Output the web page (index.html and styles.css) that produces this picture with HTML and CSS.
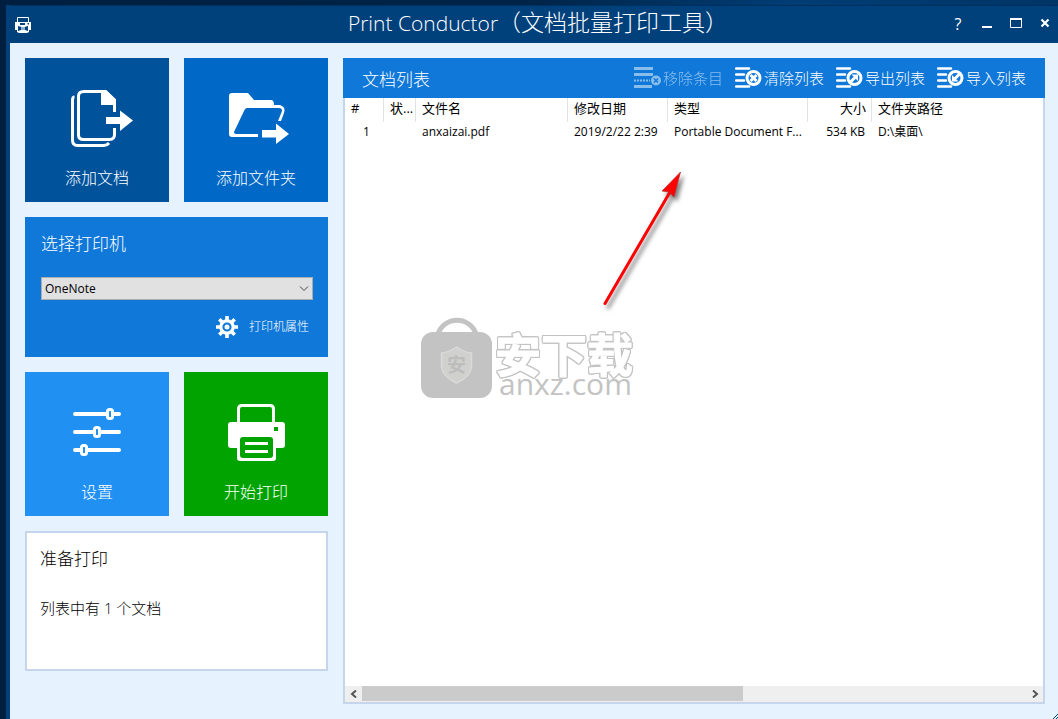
FILE: index.html
```html
<!DOCTYPE html>
<html lang="zh-CN">
<head>
<meta charset="utf-8">
<title>Print Conductor</title>
<link rel="stylesheet" href="styles.css">
</head>
<body>
<div class="window">
  <header class="titlebar">
    <svg class="app-icon" width="16" height="17" viewBox="0 0 16 17">
      <path d="M2.5 5.500V.5h11v5" fill="none" stroke="#fff"/>
      <path d="M0 5h16v8h-2v2l-2 1H4l-2-1v-2H0z" fill="#fff"/>
      <path d="M5 6h5v2H5zM12.500 6H14v1.500h-1.500zM3 9l3.500 1h3L13 9v5l-3-1H6l-3 1z" fill="#00407b"/>
      <path d="M6 10h4v3H6z" fill="#8eb0ce"/>
    </svg>
    <h1 class="title"><span class="title-name">Print Conductor</span>（文档批量打印工具）</h1>
    <div class="controls">
      <button class="control help" aria-label="帮助">?</button>
      <button class="control" aria-label="最小化"><svg width="12" height="12"><path d="M1 9h10" stroke="#fff" stroke-width="2"/></svg></button>
      <button class="control" aria-label="最大化"><svg width="12" height="12"><path d="M.5 1v8.500h11V1M0 .5h12" fill="none" stroke="#fff"/><path d="M0 1h12" stroke="#fff" stroke-width="2"/></svg></button>
      <button class="control" aria-label="关闭"><svg width="12" height="12"><path d="M2.500 1.500l7 7m0-7l-7 7" stroke="#fff" stroke-width="2.200"/></svg></button>
    </div>
  </header>
  <main class="content">
    <aside class="sidebar">
      <div class="tiles">
        <button class="tile navy">
          <svg class="tile-icon" width="64" height="64" viewBox="-3 0 64 64" overflow="visible" fill="none" stroke="#fff" stroke-width="3">
            <path d="M43.500 26V14l-9-8.500H13Q7.500 5.500 7.500 10v39q0 4.500 5 4.500h26q5 0 5-5V42"/>
            <path d="M30 4h5l10 10v5H30z" fill="#fff" stroke="none"/>
            <path d="M3.500 11q-2 0-2 3v40q0 5.500 5 5.500H33q3 0 5-2.500"/>
            <path d="M35 31h14v-6.500L62 34.500 49 45v-7H35z" fill="#fff" stroke="none"/>
          </svg>
          <span>添加文档</span>
        </button>
        <button class="tile blue">
          <svg class="tile-icon" width="64" height="64" viewBox="-1 0 64 64">
            <path d="M1 10q0-3 3-3h16l6 7h17q3 0 3 5h6q6 2 4 8l-3 8h-3l4-10q0-3-3-3H19q-2 0-3 3L6 46q0 2 3 2h21v3H4q-3 0-3-3z" fill="#fff"/>
            <path d="M34 44h14v-6.500l13 10.500-13 10v-6.500H34z" fill="#fff"/>
          </svg>
          <span>添加文件夹</span>
        </button>
      </div>
      <section class="printer">
        <label class="printer-label" for="printer">选择打印机</label>
        <div class="select-wrap">
          <select id="printer" class="printer-select"><option>OneNote</option></select>
          <svg class="chevron" width="10" height="6"><path d="M1 .5l4 4 4-4" fill="none" stroke="#444"/></svg>
        </div>
        <button class="properties">
          <svg width="22" height="22" viewBox="-11 -11 22 22" fill="none" stroke="#fff">
            <path d="M0-11V-6M0 11V6M-11 0h5M11 0H6M-7.700-7.700l3.500 3.500M7.700 7.700L4.200 4.200M-7.700 7.700l3.500-3.500M7.700-7.700L4.200-4.200" stroke-width="3.600"/>
            <circle r="6.200" stroke-width="3.200"/><circle r="2.500" fill="#fff" stroke="none"/>
          </svg>
          <span>打印机属性</span>
        </button>
      </section>
      <div class="tiles">
        <button class="tile sky">
          <svg class="tile-icon" width="64" height="64" viewBox="3 -1 64 64" fill="none" stroke="#fff">
            <path d="M10 13h44M10 31h44M10 49h44" stroke-width="4" stroke-linecap="round"/>
            <g fill="#2190f3" stroke-width="3"><rect x="42.500" y="8.500" width="5" height="9" rx="2"/><rect x="29.500" y="26.500" width="5" height="9" rx="2"/><rect x="16.500" y="44.500" width="5" height="9" rx="2"/></g>
          </svg>
          <span>设置</span>
        </button>
        <button class="tile green">
          <svg class="tile-icon" width="64" height="64" viewBox="-1 0 64 64">
            <path d="M10.500 24V9q0-3.500 3.500-3.500h28q3.500 0 3.500 3.500v15" fill="none" stroke="#fff" stroke-width="3"/>
            <path d="M3 22h51q3 0 3 3v20q0 3-3 3h-6v10q0 3-3 3H12q-3 0-3-3V48H3q-3 0-3-3V25q0-3 3-3z" fill="#fff"/>
            <rect x="12" y="37" width="33" height="21" rx="3" fill="#00a300"/><path d="M46 27h4v4h-4z" fill="#00a300"/>
            <path d="M17 43.500h23M17 51.500h23" stroke="#fff" stroke-width="3"/>
          </svg>
          <span>开始打印</span>
        </button>
      </div>
      <section class="status">
        <h2 class="status-title">准备打印</h2>
        <p class="status-text">列表中有 1 个文档</p>
      </section>
    </aside>
    <section class="documents">
      <div class="toolbar">
        <h2 class="toolbar-title">文档列表</h2>
        <button class="tool" disabled>
          <svg width="28" height="22" viewBox="0 0 28 22"><path d="M0 1.500h19M0 7.500h19M0 19.500h18" stroke="#fff" stroke-width="3"/><path d="M0 13.500h16" stroke="#fff" stroke-width="2" stroke-dasharray="2 1"/><circle cx="22" cy="13.500" r="5" fill="#fff"/><path d="M20 11.500l4 4m0-4l-4 4" stroke="#0f78d8" stroke-width="1.500"/></svg>
          <span>移除条目</span>
        </button>
        <button class="tool">
          <svg width="28" height="22" viewBox="0 0 28 22"><path d="M1 1.500h13M1 7.500h8M1 13.500h8M1 19.500h13" stroke="#fff" stroke-width="2.500" stroke-linecap="round"/><circle cx="18.500" cy="11" r="6.500" fill="none" stroke="#fff" stroke-width="3"/><path d="M15.500 8l6 6m0-6l-6 6" stroke="#fff" stroke-width="3"/></svg>
          <span>清除列表</span>
        </button>
        <button class="tool">
          <svg width="28" height="22" viewBox="0 0 28 22"><path d="M1 1.500h13M1 7.500h8M1 13.500h8M1 19.500h13" stroke="#fff" stroke-width="2.500" stroke-linecap="round"/><circle cx="18.500" cy="11" r="6.500" fill="none" stroke="#fff" stroke-width="3"/><path d="M14 15.500l6-6" stroke="#fff" stroke-width="3"/><path d="M15.500 7.500h6.500V14z" fill="#fff"/></svg>
          <span>导出列表</span>
        </button>
        <button class="tool">
          <svg width="28" height="22" viewBox="0 0 28 22"><path d="M1 1.500h13M1 7.500h8M1 13.500h8M1 19.500h13" stroke="#fff" stroke-width="2.500" stroke-linecap="round"/><circle cx="18.500" cy="11" r="6.500" fill="none" stroke="#fff" stroke-width="3"/><path d="M23 6.500l-6 6" stroke="#fff" stroke-width="3"/><path d="M15 8v6.500h6.500z" fill="#fff"/></svg>
          <span>导入列表</span>
        </button>
      </div>
      <div class="list">
        <div class="list-view">
          <table class="table">
            <colgroup><col class="c-num"><col class="c-state"><col class="c-name"><col class="c-date"><col class="c-type"><col class="c-size"><col></colgroup>
            <thead><tr><th>#</th><th>状...</th><th>文件名</th><th>修改日期</th><th>类型</th><th class="right">大小</th><th>文件夹路径</th></tr></thead>
            <tbody><tr><td class="number">1</td><td></td><td>anxaizai.pdf</td><td>2019/2/22 2:39</td><td>Portable Document F...</td><td class="right size">534 KB</td><td>D:\桌面\</td></tr></tbody>
          </table>
          <svg class="arrow" width="110" height="160" viewBox="0 0 110 160">
            <g class="arrow-shape"><path d="M15 143.500L80 32" stroke="#f00" stroke-width="3" stroke-linecap="round"/><path d="M90.500 12L84 37l-5-5-7-1z" fill="#f00" stroke="#a33" stroke-width=".7"/></g>
          </svg>
          <svg class="watermark" width="240" height="110" viewBox="0 0 240 110">
            <path d="M28 29a20 20 0 0 1 38 0" fill="none" stroke="#c3c3c3" stroke-width="5"/>
            <rect x="11" y="27" width="71" height="66" rx="12" fill="#c3c3c3"/>
            <path d="M46.500 42q7 5 15 6v14q-1 10-15 16-14-6-15-16V48q8-1 15-6z" fill="#d0d1cf" stroke="#dadada" stroke-width="1.500"/>
            <text x="46.500" y="67" text-anchor="middle" class="mark-small">安</text>
            <text x="85" y="67" class="mark-name">安下载</text>
            <text x="89" y="90" class="mark-url">anxz.com</text>
          </svg>
        </div>
        <div class="scrollbar">
          <button class="scroll-button" aria-label="向左"><svg width="8" height="8"><path d="M6 .5L2 4l4 3.500" fill="none" stroke="#555" stroke-width="2"/></svg></button>
          <div class="track"><div class="thumb"></div></div>
          <button class="scroll-button" aria-label="向右"><svg width="8" height="8"><path d="M2 .5L6 4 2 7.500" fill="none" stroke="#555" stroke-width="2"/></svg></button>
        </div>
      </div>
    </section>
  </main>
  <svg class="grip" width="5" height="5"><path d="M0 5l5-5M3 5l2-2" stroke="#00407b"/></svg>
</div>
</body>
</html>
```
FILE: styles.css
```css
* { box-sizing: border-box; }
body {
  margin: 0;
  min-height: 100vh;
  display: flex;
  padding: 5px 0 0 6px;
  background: linear-gradient(90deg, #001f40, #002448 50%, #003d75 75%, #003566);
  background-color: #002246;
  font-family: "Open Sans", "Noto Sans CJK SC", sans-serif;
  font-size: 12px;
  color: #000;
}
button { border: 0; padding: 0; background: none; color: inherit; font: inherit; }
h1, h2, p { margin: 0; font-weight: 300; }
svg { display: block; flex: none; }
.window {
  flex: 1;
  min-width: 0;
  display: flex;
  flex-direction: column;
  position: relative;
  background: #e7f2ff;
  border-left: 4px solid #00407b;
}
.titlebar {
  height: 38px;
  display: grid;
  grid-template-columns: 120px 1fr 112px;
  align-items: center;
  background: #00407b;
  color: #fff;
  border-top: 1px solid #003060;
}
.app-icon { margin-left: 5px; }
.title {
  padding-bottom: 5px;
  text-align: center;
  font-size: 23px;
  line-height: 32px;
  white-space: nowrap;
}
.title-name { font-size: 21px; }
.controls { display: flex; gap: 17px; justify-content: flex-end; padding: 0 7px 2px 0; }
.control { width: 12px; height: 20px; display: flex; align-items: center; justify-content: center; }
.help { font-size: 16px; font-weight: 500; }
.content { flex: 1; display: flex; gap: 15px; padding: 15px 13px 15px 15px; }
.sidebar { width: 303px; flex: none; display: flex; flex-direction: column; gap: 15px; }
.tiles { display: grid; grid-template-columns: 1fr 1fr; gap: 15px; }
.tile {
  height: 144px;
  display: flex;
  flex-direction: column;
  align-items: center;
  justify-content: flex-end;
  gap: 15px;
  padding-bottom: 13px;
  color: #fff;
  font-family: "Noto Sans CJK SC", sans-serif;
  font-size: 16px;
  font-weight: 300;
  line-height: 24px;
}
.navy { background: #00529b; }
.blue { background: #0068c6; }
.sky { background: #2190f3; }
.green { background: #00a300; }
.tile-icon { margin-left: 6px; }
.printer {
  height: 140px;
  display: flex;
  flex-direction: column;
  padding: 14px 15px 16px 16px;
  background: #0f78d8;
  color: #fff;
  font-weight: 300;
}
.printer-label { font-size: 17px; line-height: 26px; }
.select-wrap { position: relative; margin-top: 20px; }
.printer-select {
  display: block;
  width: 100%;
  height: 23px;
  appearance: none;
  padding: 0 3px;
  border: 1px solid #adadad;
  border-radius: 0;
  background: #e1e1e1;
  color: #000;
  font: 12px "Open Sans", sans-serif;
}
.chevron { position: absolute; right: 4px; top: 9px; }
.properties { display: flex; align-items: center; align-self: flex-end; gap: 11px; margin: 16px 4px 0 0; font-size: 12px; line-height: 22px; }
.status { height: 140px; padding: 13px; background: #fff; border: 2px solid #c5d5eb; }
.status-title { font-size: 17px; line-height: 26px; }
.status-text { margin-top: 25px; font-size: 15px; line-height: 22px; }
.documents { flex: 1; min-width: 0; display: flex; flex-direction: column; }
.toolbar {
  height: 40px;
  display: flex;
  align-items: center;
  gap: 12px;
  padding: 0 19px;
  background: #0f78d8;
  color: #fff;
}
.toolbar-title { flex: 1; font-size: 17px; line-height: 26px; padding-top: 3px; white-space: nowrap; }
.tool { display: flex; align-items: center; gap: 1px; font-size: 15px; font-weight: 300; line-height: 22px; white-space: nowrap; }
.tool:disabled { opacity: .5; }
.list { flex: 1; display: flex; flex-direction: column; background: #fff; border: 2px solid #c5d5eb; border-top: 0; }
.list-view { flex: 1; position: relative; }
.table { width: 100%; table-layout: fixed; border-collapse: separate; border-spacing: 0; }
.c-num { width: 39px; }
.c-state { width: 32px; }
.c-name { width: 152px; }
.c-date { width: 100px; }
.c-type { width: 140px; }
.c-size { width: 64px; }
.table th, .table td { padding: 0 0 0 6px; text-align: left; font-weight: 400; white-space: nowrap; overflow: hidden; }
.table th { height: 24px; padding-bottom: 4px; line-height: 20px; font-size: 13px; border-right: 1px solid #e3e3e3; }
.table th:last-child { border-right: 0; }
.table td { height: 20px; line-height: 20px; font-size: 12px; }
.table .right { text-align: right; padding-right: 5px; }
.table .size { padding-right: 7px; }
.table .number { padding-left: 18px; }
.arrow { position: absolute; left: 245px; top: 62px; }
.arrow-shape { filter: drop-shadow(3px 4px 2px rgba(0, 0, 0, .5)); }
.watermark { position: absolute; left: 65px; top: 207px; }
.mark-small { font: 700 19px "Noto Sans CJK SC", sans-serif; fill: #bdbdbd; }
.mark-name {
  font: 700 46px "Noto Sans CJK SC", sans-serif;
  fill: #fff;
  stroke: #fff;
  stroke-width: 1px;
  stroke-linejoin: round;
  filter: drop-shadow(1px 0 #c3c3c3) drop-shadow(-1px 0 #c3c3c3) drop-shadow(0 1px #c3c3c3) drop-shadow(0 -1px #c3c3c3);
}
.mark-url { font: 500 30px "Open Sans", sans-serif; fill: #c3c3c3; }
.scrollbar { height: 16px; display: flex; background: #efefef; }
.scroll-button { width: 17px; display: flex; align-items: center; justify-content: center; }
.track { flex: 1; }
.thumb { width: 57.4%; height: 15px; background: #cbcbcb; }
.grip { position: absolute; right: 0; bottom: 0; }
```
